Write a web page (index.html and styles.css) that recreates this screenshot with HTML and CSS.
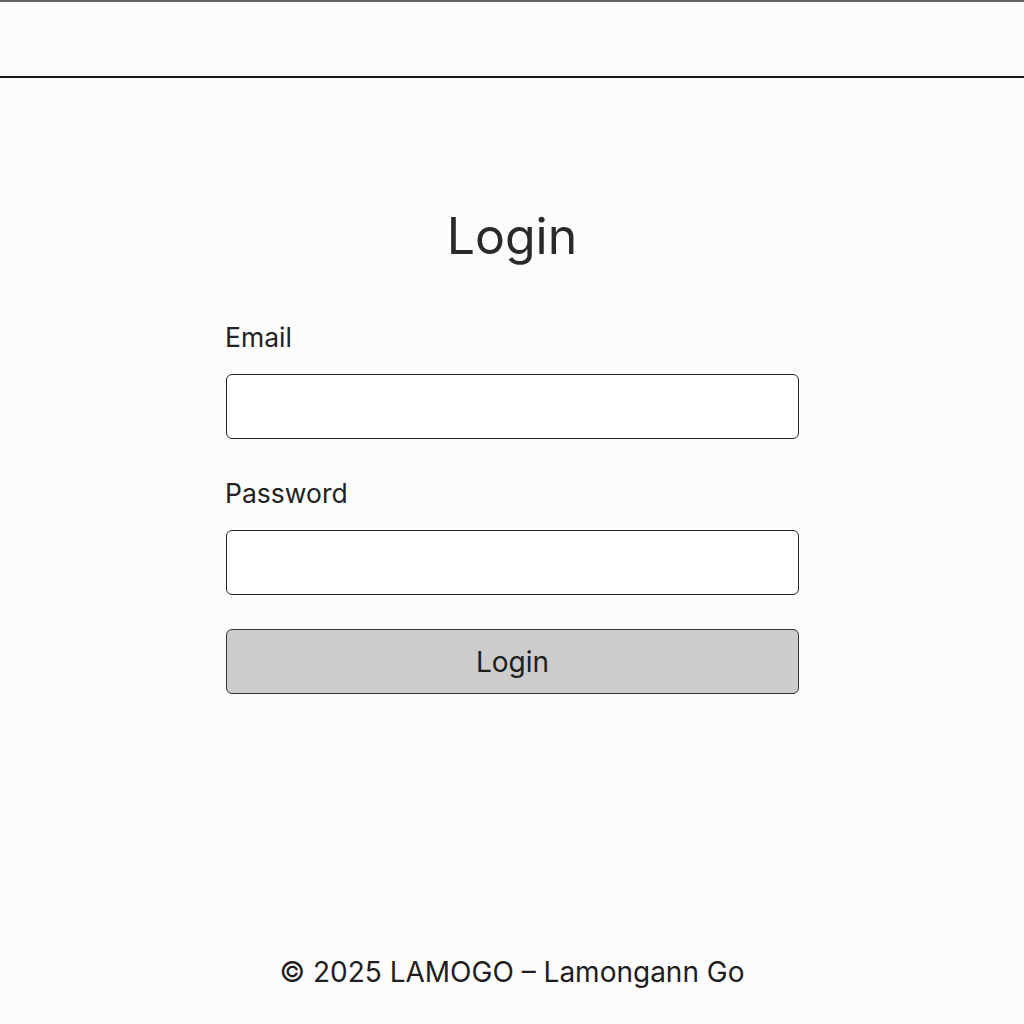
FILE: index.html
```html
<!DOCTYPE html>
<html lang="en">
<head>
<meta charset="utf-8">
<title>Login – LAMOGO</title>
<link rel="stylesheet" href="styles.css">
</head>
<body>
<header class="topbar"></header>
<main class="content">
  <h1 class="title">Login</h1>
  <form class="form">
    <label class="label" for="email">Email</label>
    <input class="field" id="email" type="email">
    <label class="label" for="password">Password</label>
    <input class="field" id="password" type="password">
    <button class="btn" type="button">Login</button>
  </form>
</main>
<footer class="footer">© 2025 LAMOGO – Lamongann Go</footer>
</body>
</html>
```
FILE: styles.css
```css
* { box-sizing: border-box; }
html, body { margin: 0; padding: 0; }
body {
  background: #fcfcfc;
  font-family: Inter, "Noto Sans", sans-serif;
  color: #222;
  height: 1024px;
  display: flex;
  flex-direction: column;
}
.topbar {
  height: 78px;
  border-top: 2px solid #666;
  border-bottom: 2px solid #1a1a1a;
  background: #fcfcfc;
}
.content {
  flex: 1;
  display: flex;
  flex-direction: column;
  align-items: center;
}
.title {
  margin: 128px 0 0;
  font-size: 50px;
  font-weight: 400;
  line-height: 60px;
  color: #2a2a2a;
}
.form {
  width: 573px;
  margin-top: 56px;
  margin-left: 1px;
  display: flex;
  flex-direction: column;
}
.label {
  font-size: 26.5px;
  line-height: 30px;
  color: #222;
  margin-bottom: 22px;
  margin-left: -1px;
}
.field {
  height: 65px;
  border: 1.5px solid #222;
  border-radius: 6px;
  background: #fff;
  margin-bottom: 39px;
  font: inherit;
}
#password { margin-bottom: 34px; }
.btn {
  height: 65px;
  border: 1.5px solid #333;
  border-radius: 6px;
  background: #cccccc;
  font: inherit;
  font-size: 28px;
  color: #1e1e1e;
}
.footer {
  text-align: center;
  font-size: 28px;
  line-height: 32px;
  color: #1e1e1e;
  padding-bottom: 36px;
}
```
